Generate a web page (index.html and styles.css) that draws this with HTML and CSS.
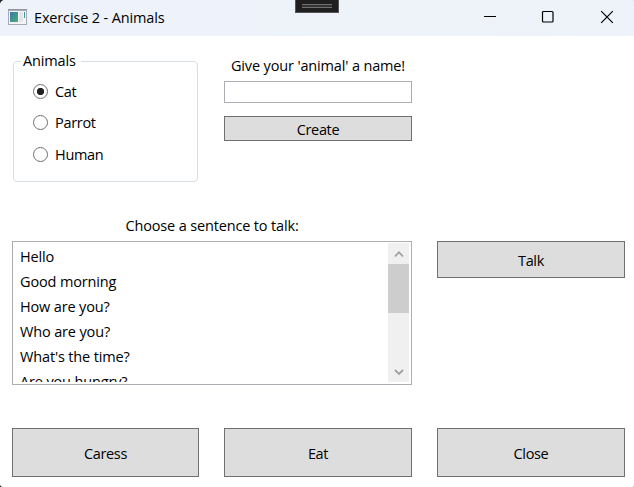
FILE: index.html
```html
<!DOCTYPE html>
<html lang="en">
<head>
<meta charset="utf-8">
<title>Exercise 2 - Animals</title>
<link rel="stylesheet" href="styles.css">
</head>
<body>
<div class="window">
  <header class="titlebar">
    <svg class="app-icon" width="19" height="16" viewBox="0 0 19 16">
      <defs><linearGradient id="pane" x2="1" y2="1"><stop stop-color="#3c78ae"/><stop offset="1" stop-color="#4bad72"/></linearGradient></defs>
      <path fill="#a5abb6" d="M0 0h19v16H0z"/>
      <path fill="#f4f4f4" d="M1 2h17v13H1z"/>
      <path fill="#8e95a4" d="M0 0h19v1H0z"/>
      <path fill="url(#pane)" d="M2 3h8v10H2z"/>
      <path fill="#e4e5e6" d="M11 3h4v10h-4z"/>
      <path fill="url(#pane)" d="M16 3h1v6h-1z"/>
    </svg>
    <h1 class="title">Exercise 2 - Animals</h1>
    <svg class="caption" width="131" height="14" viewBox="0 0 131 14" fill="none" stroke="#000">
      <path d="M1 6.5h12"/>
      <rect x="59.5" y="1.5" width="10.5" height="10.5" rx="1" stroke-width="1.2"/>
      <path stroke-width="1.2" d="M118.2 1.2l11.6 11.6M129.8 1.2l-11.6 11.6"/>
    </svg>
    <div class="handle"><span class="grip"></span></div>
  </header>
  <main class="content">
    <section class="top">
      <fieldset class="group">
        <legend class="legend">Animals</legend>
        <label class="option"><input class="radio" type="radio" name="animal" checked>Cat</label>
        <label class="option"><input class="radio" type="radio" name="animal">Parrot</label>
        <label class="option"><input class="radio" type="radio" name="animal">Human</label>
      </fieldset>
      <div class="naming">
        <label class="prompt" for="name">Give your 'animal' a name!</label>
        <input class="field" id="name" type="text">
        <button class="button create">Create</button>
      </div>
    </section>
    <section class="speech">
      <p class="sentence-label">Choose a sentence to talk:</p>
      <div class="list">
        <ul class="items">
          <li>Hello</li>
          <li>Good morning</li>
          <li>How are you?</li>
          <li>Who are you?</li>
          <li>What's the time?</li>
          <li>Are you hungry?</li>
        </ul>
        <div class="scrollbar">
          <svg class="arrow" width="21" height="21" viewBox="0 0 21 21"><path d="M7 13.5l4-4.3 4 4.3"/></svg>
          <div class="thumb"></div>
          <svg class="arrow" width="21" height="21" viewBox="0 0 21 21"><path d="M7 9l4 4 4-4"/></svg>
        </div>
      </div>
      <button class="button talk">Talk</button>
    </section>
    <footer class="actions">
      <button class="button caress">Caress</button>
      <button class="button">Eat</button>
      <button class="button">Close</button>
    </footer>
  </main>
</div>
</body>
</html>
```
FILE: styles.css
```css
* { box-sizing: border-box; }
body {
  margin: 0;
  background: #222;
  color: #000;
  font: 14.5px/20px "Open Sans", "Noto Sans", sans-serif;
  letter-spacing: -0.15px;
}
.window {
  height: 487px;
  overflow: hidden;
  background: #fff;
  border-radius: 5px 1px 1px 3px;
}
.titlebar {
  position: relative;
  display: flex;
  align-items: center;
  height: 36px;
  padding: 0 20px 2px 8px;
  background: linear-gradient(90deg, #eef3fb 40%, #edf3f8 65%, #eef2fa);
}
.title { margin: 2px 0 0 7px; font-size: 14.5px; font-weight: 400; }
.caption { margin-left: auto; }
.handle {
  position: absolute;
  top: -1px;
  left: 295px;
  width: 44px;
  height: 14px;
  padding: 4px 6px;
  background: #1f1f1f;
  border: 1px solid #555;
}
.grip {
  display: block;
  height: 4px;
  border: solid #707070;
  border-width: 1px 0;
  background: #333;
}
.content { padding: 15px 9px 0 12px; }
.top, .actions { display: grid; grid-template-columns: 187px 188px 188px; column-gap: 25px; }
.top { height: 165px; }
.group {
  height: 131px;
  min-width: 0;
  margin: 0 1px;
  padding: 5px 19px 0;
  border: 1px solid #d5dfe5;
  border-radius: 4px;
}
.legend { margin-left: -12px; padding: 0 5px 0 2px; }
.option { display: flex; align-items: center; height: 31.5px; gap: 7px; letter-spacing: -0.3px; }
.radio {
  appearance: none;
  flex: none;
  width: 15px;
  height: 15px;
  margin: 0 0 1px;
  border: 1px solid #707070;
  border-radius: 50%;
  background: #fff;
}
.radio:checked { background: radial-gradient(circle, #212121 3.3px, #fff 4px); }
.naming { display: flex; flex-direction: column; padding-top: 5px; text-align: center; }
.field {
  width: 100%;
  height: 22px;
  margin: 5px 0 13px;
  border: 1px solid #abadb3;
  background: #fff;
}
.button {
  height: 49px;
  padding: 2px 0 0;
  border: 1px solid #707070;
  background: #ddd;
  color: #000;
  font: inherit;
  letter-spacing: -0.35px;
}
.create { height: 25px; }
.speech {
  display: grid;
  grid-template: 25px 144px / 400px 188px;
  column-gap: 25px;
}
.sentence-label { margin: 0; text-align: center; }
.list {
  grid-row: 2;
  display: flex;
  justify-content: space-between;
  padding: 2px;
  border: 1px solid #abadb3;
}
.items { height: 138px; margin: 0; padding: 0 0 0 5px; overflow: hidden; list-style: none; }
.items li { height: 25px; line-height: 25px; }
.scrollbar {
  display: flex;
  flex-direction: column;
  width: 21px;
  height: 139px;
  margin: -1px 0 0;
  background: #f0f0f0;
}
.thumb { height: 49px; margin-bottom: auto; background: #cdcdcd; }
.arrow { fill: none; stroke: #a0a0a0; stroke-width: 1.8; }
.talk { grid-row: 2; height: 37px; padding-top: 3px; }
.actions { margin-top: 43px; }
```
